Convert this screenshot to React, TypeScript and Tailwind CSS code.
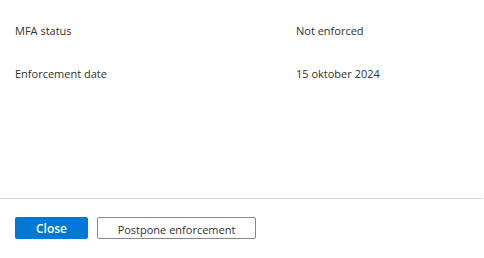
const rows = [
  { label: "MFA status", value: "Not enforced" },
  { label: "Enforcement date", value: "15 oktober 2024" },
];

export default function App() {
  return (
    <div
      className="w-[484px] h-[258px] bg-white flex flex-col text-[#323130]"
      style={{ fontFamily: '"Open Sans", "Noto Sans", sans-serif' }}
    >
      {/* Details */}
      <div className="flex-1 pt-[22px] px-[15px] flex flex-col gap-[25px]">
        {rows.map((r) => (
          <div key={r.label} className="flex h-[18px] items-center text-[11px]">
            <div className="w-[281px]">{r.label}</div>
            <div>{r.value}</div>
          </div>
        ))}
      </div>

      {/* Footer */}
      <div className="h-[60px] border-t border-[#d6d6d6] mr-[1px] flex items-start pt-[18px] px-[15px] gap-[9px]">
        <button className="w-[73px] h-[22px] pt-[2px] bg-[#0078d4] rounded-[2px] text-white text-[12px] font-semibold leading-none">
          Close
        </button>
        <button className="w-[159px] h-[22px] pt-[2px] border border-[#8a8886] rounded-[2px] text-[11px] text-[#323130] leading-none">
          Postpone enforcement
        </button>
      </div>
    </div>
  );
}
